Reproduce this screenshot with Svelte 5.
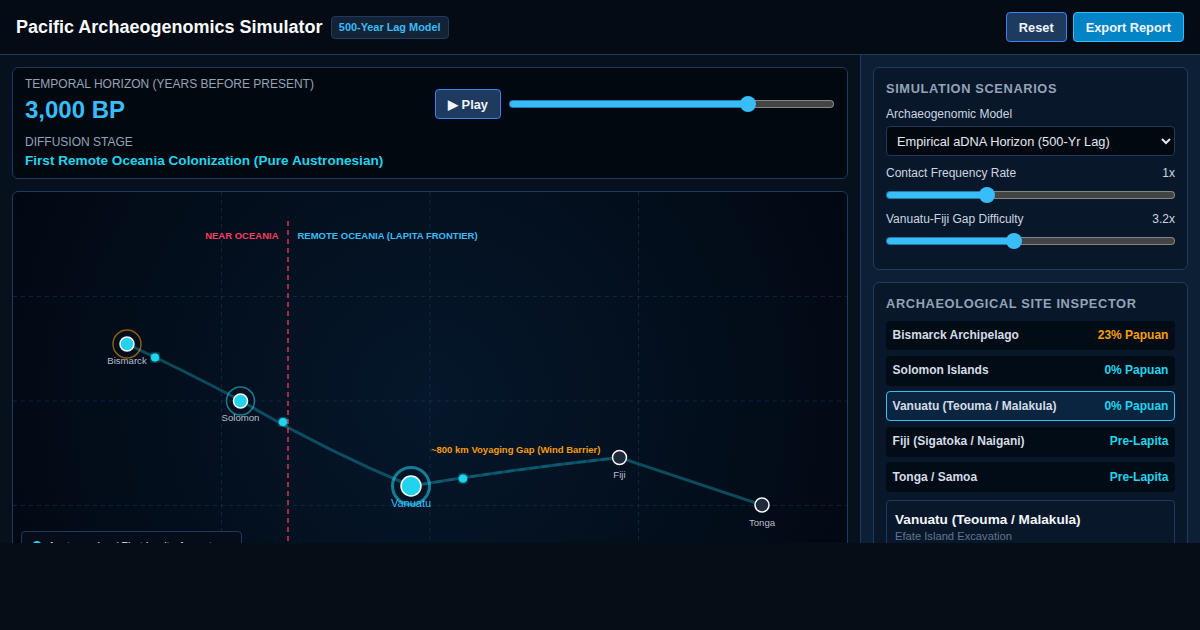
<script>
  const sites = [
    { name: 'Bismarck Archipelago', value: '23% Papuan', tone: 'amber' },
    { name: 'Solomon Islands', value: '0% Papuan', tone: 'cyan' },
    { name: 'Vanuatu (Teouma / Malakula)', value: '0% Papuan', tone: 'cyan', active: true },
    { name: 'Fiji (Sigatoka / Naigani)', value: 'Pre-Lapita', tone: 'cyan' },
    { name: 'Tonga / Samoa', value: 'Pre-Lapita', tone: 'cyan' }
  ];
  const gridX = [208.5, 417, 625.5];
  const gridY = [104.5, 209, 313.5];
</script>

<div class="app">
  <header class="topbar">
    <div class="brand">
      <h1>Pacific Archaeogenomics Simulator</h1>
      <span class="badge">500-Year Lag Model</span>
    </div>
    <div class="actions">
      <button class="btn">Reset</button>
      <button class="btn primary">Export Report</button>
    </div>
  </header>

  <div class="body">
    <main class="left">
      <section class="horizon">
        <div class="horizon-text">
          <div class="cap">Temporal Horizon (Years Before Present)</div>
          <div class="year">3,000 BP</div>
          <div class="cap stage-cap">Diffusion Stage</div>
          <div class="stage">First Remote Oceania Colonization (Pure Austronesian)</div>
        </div>
        <div class="player">
          <button class="btn play">▶ Play</button>
          <input class="range time" type="range" min="0" max="100" value="74.8" style="--p: 74%" />
        </div>
      </section>

      <section class="map">
        <svg class="chart" viewBox="0 0 834 417" width="834" height="417">
          <defs>
            <filter id="glow"><feGaussianBlur stdDeviation="2" result="b" /><feMerge><feMergeNode in="b" /><feMergeNode in="SourceGraphic" /></feMerge></filter>
          </defs>
          {#each gridX as x}
            <line class="grid" x1={x} x2={x} y1="0" y2="417" />
          {/each}
          {#each gridY as y}
            <line class="grid" x1="0" x2="834" y1={y} y2={y} />
          {/each}
          <line class="divider" x1="275" x2="275" y1="29" y2="417" />
          <text class="zone near" x="265.5" y="46.8" text-anchor="end">NEAR OCEANIA</text>
          <text class="zone remote" x="284.5" y="46.8">REMOTE OCEANIA (LAPITA FRONTIER)</text>
          <path class="route" d="M114 152 Q170 178 227.5 208.5 Q309 257 398 294 Q502 277 606.5 265.5 L749 313" />
          <path class="route-dash" d="M398 294 Q502 277 606.5 265.5" />
          <circle class="pulse" cx="142" cy="165.5" r="4" filter="url(#glow)" />
          <circle class="pulse" cx="270" cy="230" r="4" filter="url(#glow)" />
          <circle class="pulse" cx="450" cy="286.5" r="4" filter="url(#glow)" />
          <text class="gap" x="418" y="261">~800 km Voyaging Gap (Wind Barrier)</text>

          <circle class="ring amber" cx="114" cy="152" r="14" />
          <circle class="node on" cx="114" cy="152" r="7" />
          <text class="label" x="114" y="172" text-anchor="middle">Bismarck</text>

          <circle class="ring teal" cx="227.5" cy="209" r="14" />
          <circle class="node on" cx="227.5" cy="209" r="7" />
          <text class="label" x="227.5" y="229" text-anchor="middle">Solomon</text>

          <circle class="ring big" cx="398" cy="294" r="18.5" />
          <circle class="node on" cx="398" cy="294" r="10" />
          <text class="label active" x="398" y="315" text-anchor="middle">Vanuatu</text>

          <circle class="node off" cx="606.5" cy="265.5" r="7" />
          <text class="label" x="606.5" y="286" text-anchor="middle">Fiji</text>

          <circle class="node off" cx="749" cy="313" r="7" />
          <text class="label" x="749" y="334" text-anchor="middle">Tonga</text>
        </svg>
        <div class="legend">
          <span class="legend-row"><i class="dot"></i>Austronesian / First Lapita Aspect</span>
        </div>
      </section>
    </main>

    <aside class="right">
      <section class="panel sim">
        <h2>Simulation Scenarios</h2>
        <div class="field-label">Archaeogenomic Model</div>
        <select class="select">
          <option>Empirical aDNA Horizon (500-Yr Lag)</option>
        </select>
        <div class="field-row"><span>Contact Frequency Rate</span><span>1x</span></div>
        <input class="range" type="range" min="0" max="100" value="34.3" style="--p: 35%" />
        <div class="field-row second"><span>Vanuatu-Fiji Gap Difficulty</span><span>3.2x</span></div>
        <input class="range" type="range" min="0" max="100" value="43.7" style="--p: 44%" />
      </section>

      <section class="panel inspector">
        <h2>Archaeological Site Inspector</h2>
        <ul class="sites">
          {#each sites as s}
            <li class="site" class:active={s.active}>
              <span>{s.name}</span>
              <span class={s.tone}>{s.value}</span>
            </li>
          {/each}
        </ul>
        <div class="detail">
          <div class="detail-title">Vanuatu (Teouma / Malakula)</div>
          <div class="detail-sub">Efate Island Excavation</div>
        </div>
      </section>
    </aside>
  </div>
</div>

<style>
  :global(body) {
    background: #050d17;
    color-scheme: dark;
  }
  .app {
    height: 543px;
    overflow: hidden;
    display: flex;
    flex-direction: column;
    font-family: "Liberation Sans", Arial, sans-serif;
    color: #e2e8f0;
    background: #07111e;
  }
  .topbar {
    flex: none;
    height: 54px;
    box-sizing: content-box;
    border-bottom: 1px solid #1e3a5f;
    background: #040b14;
    display: flex;
    align-items: center;
    justify-content: space-between;
    padding: 0 16px;
  }
  .brand { display: flex; align-items: center; gap: 8.4px; }
  h1 { margin: 0; font-size: 18px; font-weight: 700; color: #f8fafc; }
  .badge {
    font-size: 10.9px;
    font-weight: 700;
    color: #38bdf8;
    background: #132235;
    border: 1px solid #1e3a5f;
    border-radius: 4px;
    padding: 4.5px 7px;
  }
  .actions { display: flex; gap: 6px; }
  .btn {
    font: 700 12.8px "Liberation Sans", Arial, sans-serif;
    color: #f1f5f9;
    background: #1e3a5f;
    border: 1px solid #3b82f6;
    border-radius: 4px;
    padding: 0 12px;
    height: 30px;
  }
  .btn.primary { background: #0284c7; border-color: #38bdf8; }
  .body { flex: 1; min-height: 0; display: flex; overflow: hidden; }
  .left {
    width: 860px;
    flex: none;
    box-sizing: border-box;
    padding: 12px;
    display: flex;
    flex-direction: column;
    gap: 12px;
  }
  .horizon {
    flex: none;
    height: 112px;
    box-sizing: border-box;
    background: #02080f;
    border: 1px solid #1e3a5f;
    border-radius: 6px;
    padding: 9px 12px;
    display: flex;
    justify-content: space-between;
  }
  .cap { font-size: 12px; color: #94a3b8; text-transform: uppercase; line-height: 14px; }
  .year { font-size: 24px; font-weight: 700; color: #38bdf8; line-height: 30px; margin-top: 4px; }
  .stage-cap { margin-top: 10px; }
  .stage { font-size: 13.6px; font-weight: 700; color: #22d3ee; margin-top: 4px; line-height: 16px; }
  .player { display: flex; align-items: center; gap: 8px; width: 399px; height: 30px; margin-top: 12px; margin-right: 1px; }
  .play { height: 30px; width: 66px; padding: 0; flex: none; }
  .range {
    appearance: none;
    -webkit-appearance: none;
    background: transparent;
    margin: 0;
    width: 100%;
    display: block;
    height: 16px;
  }
  .range::-webkit-slider-runnable-track {
    height: 8px;
    box-sizing: border-box;
    border: 1px solid transparent;
    border-radius: 4px;
    background:
      linear-gradient(to right, #38bdf8 var(--p), transparent var(--p)) padding-box,
      linear-gradient(#444, #444) padding-box,
      linear-gradient(to right, #1c7ba8 var(--p), #858585 var(--p)) border-box;
  }
  .range::-webkit-slider-thumb {
    -webkit-appearance: none;
    width: 16px;
    height: 16px;
    margin-top: -5px;
    border-radius: 50%;
    background: #38bdf8;
  }
  .time { flex: 1; min-width: 0; }
  .map {
    flex: none;
    height: 419px;
    box-sizing: border-box;
    position: relative;
    border: 1px solid #1e3a5f;
    border-radius: 6px;
    overflow: hidden;
    background: radial-gradient(circle at 50% 50%, #05172b 0%, #020812 100%);
  }
  .chart { display: block; }
  .grid { stroke: #1e3a5f; stroke-width: 1; stroke-dasharray: 4 4; opacity: .5; }
  .divider { stroke: #f43f5e; stroke-width: 1.5; stroke-dasharray: 5 4; opacity: .85; }
  .zone { font-size: 9.5px; font-weight: 700; }
  .near { fill: #f43f5e; }
  .remote { fill: #38bdf8; }
  .route { fill: none; stroke: #22d3ee; stroke-opacity: .3; stroke-width: 3; }
  .route-dash { fill: none; stroke: #22d3ee; stroke-opacity: .1; stroke-width: 3; stroke-dasharray: 8 4; }
  .pulse { fill: #22d3ee; }
  .gap { font-size: 9.5px; font-weight: 700; fill: #f59e0b; }
  .ring { fill: none; stroke-width: 1.5; }
  .ring.amber { stroke: #f59e0b; stroke-opacity: .55; }
  .ring.teal { stroke: #22d3ee; stroke-opacity: .55; }
  .ring.big { stroke: #22d3ee; stroke-opacity: .55; stroke-width: 3; }
  .node { stroke: #f8fafc; stroke-width: 1.5; }
  .node.on { fill: #22d3ee; }
  .node.off { fill: #1e293b; }
  .label { font-size: 9.6px; fill: #b4bfcc; }
  .label.active { font-size: 11px; fill: #38bdf8; }
  .legend {
    position: absolute;
    left: 8px;
    top: 339px;
    width: 221px;
    box-sizing: border-box;
    background: #040d19;
    border: 1px solid #1e3a5f;
    border-radius: 4px;
    padding: 8px 10px;
    font-size: 11px;
  }
  .legend-row { display: flex; align-items: center; gap: 6px; }
  .dot { width: 10px; height: 10px; border-radius: 50%; background: #22d3ee; }
  .right {
    flex: 1;
    min-width: 0;
    box-sizing: border-box;
    border-left: 1px solid #1e3a5f;
    background: #0d1f35;
    padding: 12px;
    display: flex;
    flex-direction: column;
    gap: 12px;
  }
  .panel {
    flex: none;
    background: #08182a;
    border: 1px solid #1e3a5f;
    border-radius: 6px;
    padding: 12px;
  }
  .sim { height: 203px; box-sizing: border-box; }
  h2 {
    margin: 0;
    font-size: 12.8px;
    font-weight: 700;
    color: #94a3b8;
    letter-spacing: 0.64px;
    text-transform: uppercase;
    line-height: 17px;
  }
  .field-label { font-size: 12px; color: #cbd5e1; margin-top: 10px; line-height: 14px; }
  .select {
    display: block;
    width: 100%;
    height: 30px;
    margin-top: 5px;
    background: #02080f;
    color: #e2e8f0;
    border: 1px solid #1e3a5f;
    border-radius: 4px;
    font: 12.8px "Liberation Sans", Arial, sans-serif;
    padding: 0 6px;
  }
  .field-row {
    display: flex;
    justify-content: space-between;
    font-size: 12px;
    color: #cbd5e1;
    line-height: 14px;
    margin-top: 10px;
    margin-bottom: 7px;
  }
  .field-row.second { margin-top: 9px; }
  .sites { list-style: none; margin: 8.5px 0 0; padding: 0; }
  .site {
    display: flex;
    justify-content: space-between;
    align-items: center;
    height: 29.6px;
    box-sizing: border-box;
    margin-bottom: 5.9px;
    padding: 0 5.6px 0.6px;
    border: 1px solid transparent;
    border-radius: 4px;
    background: #020c17;
    font-size: 12px;
    font-weight: 700;
    color: #d5dce6;
  }
  .site.active { background: #0a2540; border-color: #38bdf8; }
  .amber { color: #f59e0b; }
  .cyan { color: #22d3ee; }
  .detail {
    margin-top: 8.3px;
    border: 1px solid #1e3a5f;
    border-radius: 4px;
    background: #08182a;
    padding: 11px 8px 10px;
  }
  .detail-title { font-size: 13.6px; font-weight: 700; color: #f1f5f9; }
  .detail-sub { font-size: 11.2px; color: #64748b; margin-top: 3px; }
</style>
